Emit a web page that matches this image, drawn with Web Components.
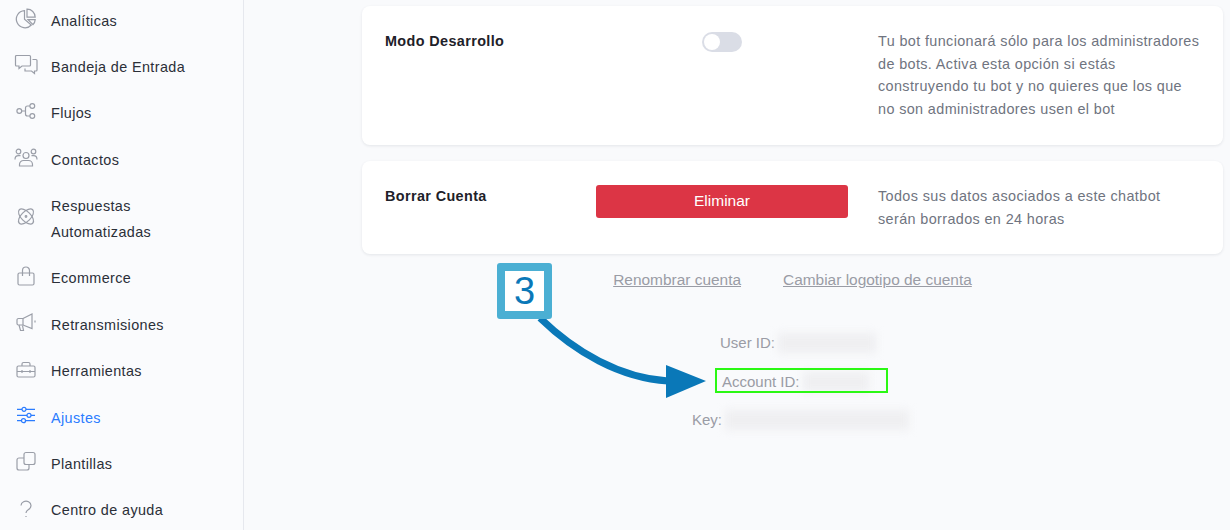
<!DOCTYPE html>
<html lang="es"><head><meta charset="utf-8"><title>Ajustes</title>
<style>
html,body{margin:0;padding:0;height:100%;background:#f9fafc;overflow:hidden}
body{font-family:"Liberation Sans",Arial,sans-serif}
</style></head><body>
<app-shell>
  <side-nav slot="nav">
    <nav-item icon="pie">Analíticas</nav-item>
    <nav-item icon="chat">Bandeja de Entrada</nav-item>
    <nav-item icon="flow">Flujos</nav-item>
    <nav-item icon="people">Contactos</nav-item>
    <nav-item icon="atom">Respuestas<br>Automatizadas</nav-item>
    <nav-item icon="bag">Ecommerce</nav-item>
    <nav-item icon="mega">Retransmisiones</nav-item>
    <nav-item icon="case">Herramientas</nav-item>
    <nav-item icon="sliders" active>Ajustes</nav-item>
    <nav-item icon="copy">Plantillas</nav-item>
    <nav-item icon="help">Centro de ayuda</nav-item>
  </side-nav>
  <setting-card title-text="Modo Desarrollo">
    <toggle-switch slot="control"></toggle-switch>
    Tu bot funcionará sólo para los administradores de bots. Activa esta opción si estás construyendo tu bot y no quieres que los que no son administradores usen el bot
  </setting-card>
  <setting-card title-text="Borrar Cuenta">
    <danger-button slot="control">Eliminar</danger-button>
    Todos sus datos asociados a este chatbot<br>serán borrados en 24 horas
  </setting-card>
  <link-row></link-row>
  <id-list></id-list>
  <step-callout slot="overlay"></step-callout>
</app-shell>
<script>
const ICONS={
pie:'<path d="M10.5 2.6A8.6 8.6 0 1 0 17.3 17L10.5 11.2Z"/><path d="M13 1.2A8 8 0 0 1 21.2 9.2H13Z"/><path d="M14 11.6H21.2A8 8 0 0 1 19 16.6Z"/>',
chat:'<path d="M2.5 1.5H15.5a1 1 0 0 1 1 1V11a1 1 0 0 1-1 1H8L5 14.5V12H2.5a1 1 0 0 1-1-1V2.5a1 1 0 0 1 1-1Z"/><path d="M18.5 5.5H22a1 1 0 0 1 1 1V16a1 1 0 0 1-1 1H20.500v2.500L17.500 17H11V14.500"/>',
flow:'<circle cx="5.300" cy="10" r="2.400"/><circle cx="18.300" cy="5" r="2.400"/><circle cx="18.300" cy="15" r="2.400"/><path d="M7.700 10H11.500M15.900 5H13.500a2 2 0 0 0-2 2v6a2 2 0 0 0 2 2H15.900"/>',
people:'<circle cx="12" cy="8.500" r="3"/><path d="M5.500 19v-1.500a4 4 0 0 1 4-4h5a4 4 0 0 1 4 4V19Z"/><circle cx="4.500" cy="4.500" r="2.300"/><circle cx="19.500" cy="4.500" r="2.300"/><path d="M1 12.500c0-2.200 1.500-3.800 3.500-3.800H6.500M23 12.500c0-2.200-1.500-3.800-3.500-3.800H17.500"/>',
atom:'<ellipse cx="12" cy="9.500" rx="9.500" ry="4.800" transform="rotate(45 12 9.500)"/><ellipse cx="12" cy="9.500" rx="9.500" ry="4.800" transform="rotate(-45 12 9.500)"/><circle cx="12" cy="9.500" r=".8"/>',
bag:'<path d="M5.500 7H18.500a1.500 1.500 0 0 1 1.500 1.500V17.500a1.500 1.500 0 0 1-1.500 1.500H5.500A1.500 1.500 0 0 1 4 17.500V8.500A1.500 1.500 0 0 1 5.500 7Z"/><path d="M8.500 10V4.500a3.500 3.500 0 0 1 7 0V10"/>',
mega:'<path d="M9 6.500L18 2V16.500L9 13H4.500A1.500 1.500 0 0 1 3 11.500V8A1.500 1.500 0 0 1 4.500 6.500Z"/><path d="M9 6.500V13M5 13l1.500 5.500H9.500L8.500 13.500M21 8.500V10.500"/>',
case:'<rect x="3" y="7" width="18" height="11" rx="1.500"/><path d="M8 7V5A1.500 1.500 0 0 1 9.500 3.500h5A1.500 1.500 0 0 1 16 5V7M3 12.500H21M8 11v3M16 11v3"/>',
sliders:'<path d="M3 4.300H8M12 4.300H21M3 10.300H13M17 10.300H21M3 15.700H7.500M11.500 15.700H21"/><circle cx="10" cy="4.300" r="2"/><circle cx="15" cy="10.300" r="2"/><circle cx="9.500" cy="15.700" r="2"/>',
copy:'<rect x="10" y="1.500" width="11" height="12" rx="2"/><path d="M10 7H5A2 2 0 0 0 3 9v8a2 2 0 0 0 2 2h8a2 2 0 0 0 2-2V13.500"/>',
help:'<path d="M7 7.500a5 4.500 0 1 1 7.500 4c-1.500 1-2.500 1.500-2.500 3.500"/><path d="M12 18v1"/>'
};
function def(name,html,extra){
  class C extends HTMLElement{
    constructor(){super();const r=this.attachShadow({mode:'open'});r.innerHTML=html;}
    connectedCallback(){extra&&extra.call(this,this.shadowRoot);}
  }
  customElements.define(name,C);
}
def('app-shell',`<style>
:host{display:flex;position:relative;width:1230px;height:530px;overflow:hidden;background:#f9fafc;letter-spacing:.38px}
main{flex:1;min-width:0;padding:6px 7px 0 118px;display:flex;flex-direction:column;gap:16px}
</style><slot name="nav"></slot><main><slot></slot></main><slot name="overlay"></slot>`);
def('side-nav',`<style>
:host{display:block;flex:0 0 243px;width:243px;border-right:1px solid #e6e8ee;background:#fafbfd}
div{margin-top:-2.700px;display:flex;flex-direction:column}
</style><div><slot></slot></div>`);
def('nav-item',`<style>
:host{display:flex;align-items:center;gap:13px;padding:10.200px 0 10.200px 14px;font-size:14.400px;line-height:26px;color:#2b2f38}
:host([active]){color:#2b7cff}
svg{flex:none;width:24px;height:24px;fill:none;stroke:#9a9ea8;stroke-width:1.200;margin-top:-1px}
:host([active]) svg{stroke:#2b7cff}
</style><svg viewBox="0 0 24 24"></svg><span><slot></slot></span>`,function(r){r.querySelector('svg').innerHTML=ICONS[this.getAttribute('icon')];});
def('setting-card',`<style>
:host{display:grid;grid-template-columns:211px 252px 1fr;column-gap:0;padding:24px 23px;background:#fff;border-radius:8px;box-shadow:0 1px 3px rgba(40,50,70,.1);font-size:14.400px;line-height:22.700px}
h3{margin:0;font:inherit;font-weight:700;color:#1e2129}
.c{display:flex;justify-content:center;align-items:flex-start}
p{margin:0 0 0 30px;color:#6f7480;width:323px}
</style><h3></h3><div class="c"><slot name="control"></slot></div><p><slot></slot></p>`,function(r){r.querySelector('h3').textContent=this.getAttribute('title-text');});
def('toggle-switch',`<style>
:host{display:block;width:40px;height:20px;margin-top:2px;background:#dadde6;border-radius:10px;padding:2px;box-sizing:border-box}
i{display:block;width:16px;height:16px;border-radius:50%;background:#fff}
</style><i></i>`);
def('danger-button',`<style>
:host{display:flex;align-items:center;justify-content:center;width:252px;height:33px;background:#dc3545;color:#fff;border-radius:3px;font-size:15.500px;letter-spacing:0}
</style><slot></slot>`);
def('link-row',`<style>
:host{display:flex;justify-content:center;gap:42px;margin-top:0;font-size:15.450px;line-height:20px;letter-spacing:0}
a{color:#9a9ca5;text-decoration:underline}
</style><a href="#">Renombrar cuenta</a><a href="#">Cambiar logotipo de cuenta</a>`);
def('id-list',`<style>
:host{display:flex;flex-direction:column;gap:18.500px;margin-top:27px;font-size:15px;line-height:20px;color:#9a9ca5;letter-spacing:0}
div{display:flex;align-items:center;gap:3px;white-space:nowrap}
b{display:block;height:20px;background:#efeff1;filter:blur(4px)}
</style>
<div style="margin-left:358px"><span>User ID:</span><b style="width:98px"></b></div>
<div style="margin-left:360px"><span>Account ID:</span><b style="width:66px"></b></div>
<div style="margin-left:330px"><span>Key:</span><b style="width:184px"></b></div>`);
def('step-callout',`<style>
:host{position:absolute;inset:0;pointer-events:none}
.n{position:absolute;left:497px;top:263px;width:55px;height:56px;box-sizing:border-box;border:8px solid #4bafd3;border-radius:3px;background:#fff;color:#0a78b8;font-size:38px;line-height:40px;text-align:center;letter-spacing:0}
.g{position:absolute;left:715px;top:368px;width:173px;height:25px;box-sizing:border-box;border:2px solid #2bf814}
svg{position:absolute;left:0;top:0}
</style><svg width="1230" height="530"><path d="M540 318C575 352 620 378 668 381" fill="none" stroke="#0a78b8" stroke-width="7"/><path d="M666 365L706 381L666 398Z" fill="#0a78b8"/></svg><div class="n">3</div><div class="g"></div>`);
</script>
</body></html>
